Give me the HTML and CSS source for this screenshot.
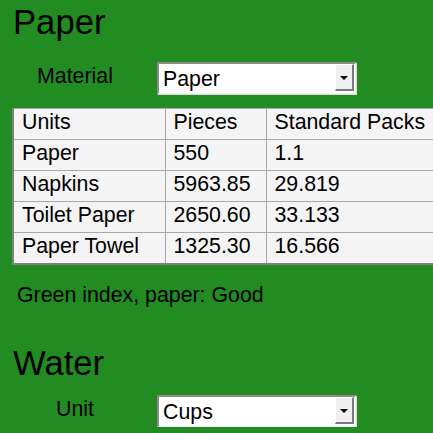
FILE: index.html
```html
<!DOCTYPE html>
<html>
<head>
<meta charset="utf-8">
<link rel="stylesheet" href="styles.css">
</head>
<body>
<section class="section section-paper">
  <h1 class="title">Paper</h1>
  <div class="form-row">
    <span class="label">Material</span>
    <div class="select">
      <span class="select-value">Paper</span>
      <span class="select-button"><span class="arrow"></span></span>
    </div>
  </div>
  <table class="units-table">
    <colgroup>
      <col class="col-a">
      <col class="col-b">
      <col class="col-c">
    </colgroup>
    <tr><td>Units</td><td>Pieces</td><td>Standard Packs</td></tr>
    <tr><td>Paper</td><td>550</td><td>1.1</td></tr>
    <tr><td>Napkins</td><td>5963.85</td><td>29.819</td></tr>
    <tr><td>Toilet Paper</td><td>2650.60</td><td>33.133</td></tr>
    <tr><td>Paper Towel</td><td>1325.30</td><td>16.566</td></tr>
  </table>
  <p class="index">Green index, paper: Good</p>
</section>
<section class="section section-water">
  <h1 class="title">Water</h1>
  <div class="form-row">
    <span class="label">Unit</span>
    <div class="select">
      <span class="select-value">Cups</span>
      <span class="select-button"><span class="arrow"></span></span>
    </div>
  </div>
</section>
</body>
</html>
```
FILE: styles.css
```css
html {
  overflow: hidden;
}
body {
  margin: 0;
  padding-top: 2px;
  background: #228b22;
  color: #000;
  font-family: "Liberation Sans", Arial, sans-serif;
  font-size: 21.33px;
  line-height: 24px;
}
.title {
  margin: 0 0 0 13px;
  font-size: 34.67px;
  font-weight: normal;
  line-height: 40px;
}
.form-row {
  display: flex;
  align-items: flex-start;
  margin-top: 20px;
}
.section-water .title {
  margin-top: 36px;
}
.section-water .form-row {
  margin-top: 12px;
}
.label {
  width: 124px;
  margin-left: 13px;
  margin-top: 2px;
  text-align: center;
}
.select {
  box-sizing: border-box;
  width: 199px;
  height: 32px;
  margin-left: 20px;
  display: flex;
  align-items: center;
  background: #fff;
  border-style: solid;
  border-width: 2px 1px 1px 2px;
  border-color: #8c8c8c #f0f0f0 #f0f0f0 #8c8c8c;
  box-shadow: 1px 1px 0 #dcdcdc;
}
.select-value {
  flex: 1;
  padding-left: 4px;
  padding-top: 1px;
}
.select-button {
  box-sizing: border-box;
  width: 19px;
  height: 27px;
  margin-right: 1px;
  align-self: flex-start;
  display: flex;
  align-items: center;
  justify-content: center;
  background: #f0f0f0;
  border-style: solid;
  border-width: 1px 2px 2px 1px;
  border-color: #ffffff #7a7a7a #7a7a7a #ffffff;
}
.arrow {
  width: 0;
  height: 0;
  border-left: 4px solid transparent;
  border-right: 4px solid transparent;
  border-top: 4px solid #000;
  margin-top: 2px;
}
.units-table {
  margin: 14px 0 0 12px;
  width: 423px;
  table-layout: fixed;
  border-collapse: collapse;
  background: #f4f4f4;
  border-style: solid;
  border-width: 1px 2px 2px 2px;
  border-color: #b0b0b0 #909090 #808080 #808080;
}
.col-a { width: 152px; }
.col-b { width: 101px; }
.col-c { width: 170px; }
.units-table td {
  padding: 1px 8px 5px 8px;
  border: 1px solid #a8a8a8;
  white-space: nowrap;
  line-height: 24px;
}
.index {
  margin: 18px 0 0 17px;
}
```
